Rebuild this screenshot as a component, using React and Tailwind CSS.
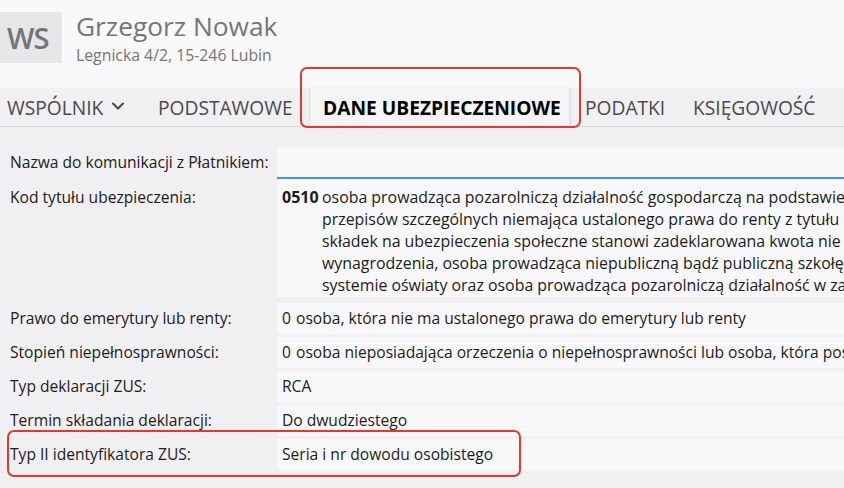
import { ChevronDown } from "lucide-react";

const font = { fontFamily: '"Open Sans", "Noto Sans", sans-serif' };

function Row({ label, children, first }) {
  return (
    <>
      <div className="pl-[10px] flex items-center text-[15.6px] text-[#1c1c1c] h-[31px]">{label}</div>
      <div className={"bg-[#f8f8fa] pl-[5px] flex items-center h-[31px] text-[15.6px] text-[#1c1c1c] whitespace-nowrap overflow-hidden " + (first ? "border-b-2 border-[#3b9de0] h-[32px]" : "")}>
        {children}
      </div>
    </>
  );
}

function Coded({ code, text }) {
  return (
    <>
      <span className="inline-block w-[14px] shrink-0">{code}</span>
      <span>{text}</span>
    </>
  );
}

function App() {
  const tabs = [
    { name: "PODSTAWOWE", cls: "w-[163px] pl-[12px]" },
  ];

  return (
    <main style={font} className="relative w-[844px] h-[488px] overflow-hidden bg-[#f0eff2]">
      <header className="h-[88px] bg-[#f9f8fa] flex pt-[12px]">
        <div className="w-[62px] h-[51px] bg-[#e6e5e7] flex items-center pl-[7px] text-[29px] font-semibold text-[#747474] tracking-[-1px]">
          WS
        </div>
        <div className="ml-[14px] text-[#767676]">
          <div className="text-[26.3px] leading-[30px] mt-[-1px]">Grzegorz Nowak</div>
          <div className="text-[15.8px] leading-[20px] mt-[4px]">Legnicka 4/2, 15-246 Lubin</div>
        </div>
      </header>

      <nav className="h-[39px] flex border-b border-[#dadada] text-[19.2px] text-[#4a4a4a]">
        <div className="w-[146px] pl-[7px] flex items-center gap-[5px] pt-[2px]">
          WSPÓLNIK <ChevronDown size={20} strokeWidth={2.5} className="mb-[4px]" />
        </div>
        {tabs.map((t) => (
          <div key={t.name} className={t.cls + " flex items-center pt-[2px]"}>{t.name}</div>
        ))}
        <div className="w-[261px] pl-[13px] flex items-center pt-[2px] bg-[#f5f4f6] border-x border-[#e0dfe2] shadow-[1px_0_2px_rgba(0,0,0,0.08)] font-bold text-black">
          DANE UBEZPIECZENIOWE
        </div>
        <div className="w-[110px] pl-[15px] flex items-center pt-[2px]">PODATKI</div>
        <div className="pl-[13px] flex items-center pt-[2px]">KSIĘGOWOŚĆ</div>
      </nav>

      <section className="pt-[20px] grid grid-cols-[277px_1fr] gap-y-[3px]">
        <Row label="Nazwa do komunikacji z Płatnikiem:" first> </Row>

        <div className="pl-[10px] pt-[6px] text-[15.6px] text-[#1c1c1c] leading-[22px] mt-[-2px]">Kod tytułu ubezpieczenia:</div>
        <div className="bg-[#f8f8fa] pl-[5px] pt-[6px] pb-[1px] mt-[-2px] flex text-[15.9px] leading-[22px] text-[#1c1c1c] whitespace-nowrap overflow-hidden">
          <span className="font-bold w-[40px] shrink-0 text-[16px]">0510</span>
          <div>
            <div>osoba prowadząca pozarolniczą działalność gospodarczą na podstawie przepisów o swobodzie działalności gospodarczej lub innych</div>
            <div>przepisów szczególnych niemająca ustalonego prawa do renty z tytułu niezdolności do pracy, dla której podstawę wymiaru</div>
            <div>składek na ubezpieczenia społeczne stanowi zadeklarowana kwota nie niższa niż 30% minimalnego</div>
            <div>wynagrodzenia, osoba prowadząca niepubliczną bądź publiczną szkołę, inną formę wychowania przedszkolnego</div>
            <div>systemie oświaty oraz osoba prowadząca pozarolniczą działalność w zakresie</div>
          </div>
        </div>

        <div className="col-span-2 h-0" />

        <Row label="Prawo do emerytury lub renty:">
          <Coded code="0" text="osoba, która nie ma ustalonego prawa do emerytury lub renty" />
        </Row>
        <Row label="Stopień niepełnosprawności:">
          <Coded code="0" text="osoba nieposiadająca orzeczenia o niepełnosprawności lub osoba, która posiada orzeczenie" />
        </Row>
        <Row label="Typ deklaracji ZUS:">RCA</Row>
        <Row label="Termin składania deklaracji:">Do dwudziestego</Row>
        <Row label="Typ II identyfikatora ZUS:">Seria i nr dowodu osobistego</Row>
      </section>

      <div className="absolute left-[300px] top-[67px] w-[281px] h-[61px] border-2 border-[#e5382c] rounded-[7px]" />
      <div className="absolute left-[7px] top-[430px] w-[514px] h-[47px] border-2 border-[#e5382c] rounded-[7px]" />
    </main>
  );
}

export default App;
